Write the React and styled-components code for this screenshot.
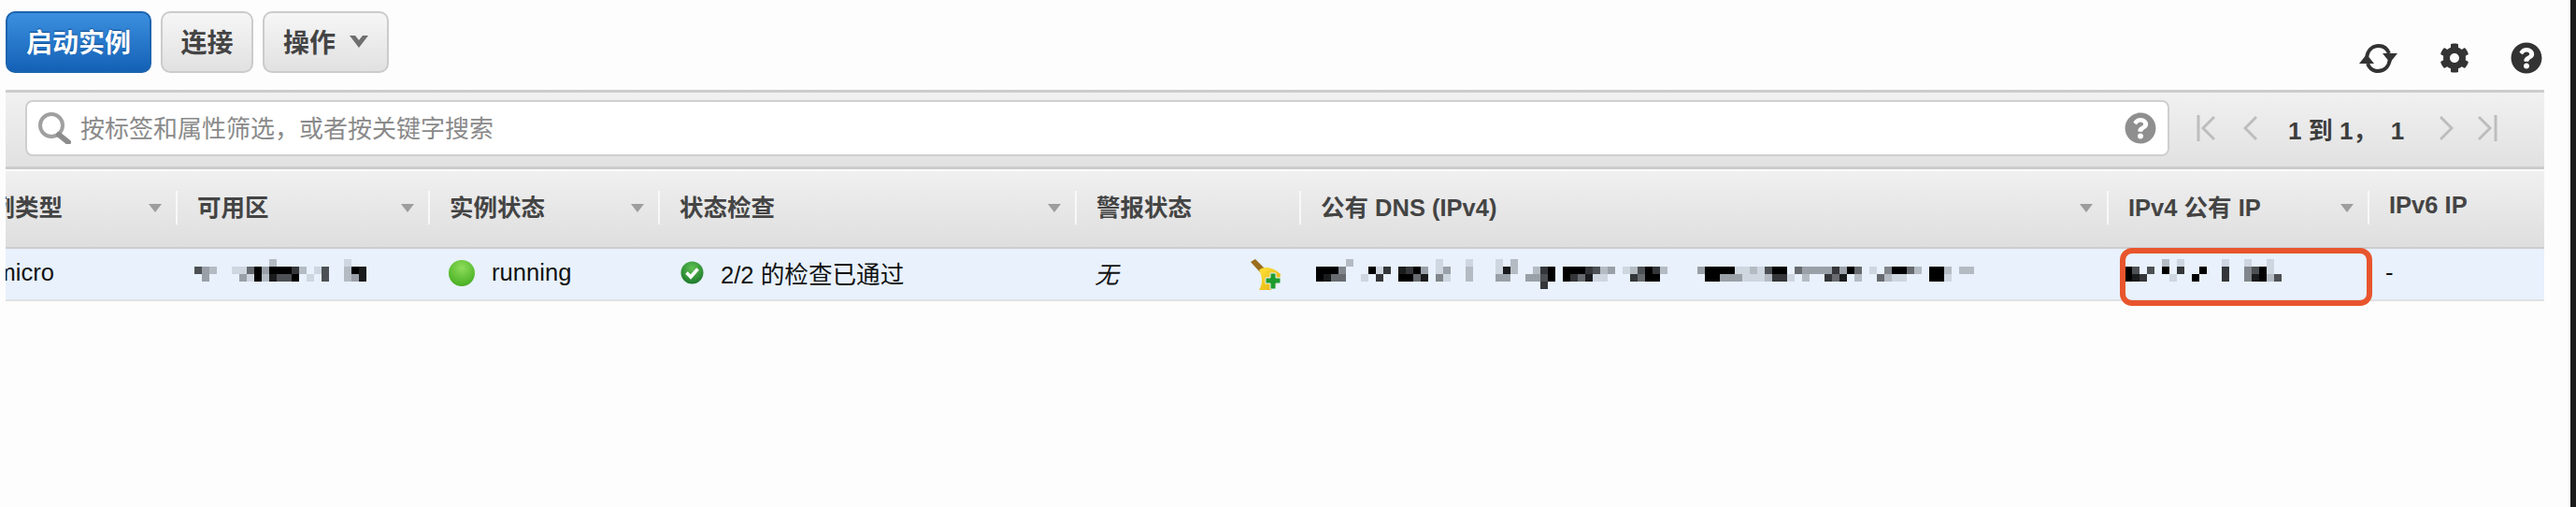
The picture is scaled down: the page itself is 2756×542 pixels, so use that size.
import React from 'react';
import styled, { createGlobalStyle } from 'styled-components';
import { FaCog, FaQuestionCircle } from 'react-icons/fa';

const GlobalStyle = createGlobalStyle`
  html, body {
    margin: 0;
    padding: 0;
    background: #fdfdfd;
  }
  body {
    font-family: "Liberation Sans", "Noto Sans CJK SC", sans-serif;
    color: #111;
  }
`;

const GRID_COLUMNS = '244px 270px 246px 446px 240px 864px 279px 189px';

const Page = styled.div`
  display: flex;
  width: 2756px;
  height: 542px;
  overflow: hidden;
`;

const Main = styled.div`
  flex: 1;
  min-width: 0;
  padding: 0 28px 0 6px;
`;

const Strip = styled.div`
  width: 6px;
  background: #1b1b1b;
`;

const Toolbar = styled.div`
  display: flex;
  justify-content: space-between;
  height: 96px;
  padding-top: 12px;
  box-sizing: border-box;
`;

const Buttons = styled.div`
  display: flex;
  gap: 10px;
`;

const Button = styled.div`
  display: flex;
  align-items: center;
  justify-content: center;
  gap: 15px;
  box-sizing: border-box;
  width: ${(props) => props.$width}px;
  height: 66px;
  padding-bottom: 3px;
  border-radius: 10px;
  font-size: 28px;
  font-weight: 700;
  border: 2px solid ${(props) => (props.$primary ? '#1d64ad' : '#cbcbcb')};
  color: ${(props) => (props.$primary ? '#fff' : '#444')};
  background: ${(props) => (props.$primary
    ? 'linear-gradient(#3c8fdf, #1361b6)'
    : 'linear-gradient(#f6f6f6, #e1e1e1)')};
  text-shadow: ${(props) => (props.$primary ? '0 -1px 1px #0d4d92' : 'none')};
`;

const ToolIcons = styled.div`
  display: flex;
  align-self: flex-end;
  align-items: center;
  margin: 0 2px 17px 0;
  color: #333;
`;

const ToolIcon = styled.div`
  display: flex;
  margin-left: ${(props) => props.$gap || 0}px;
`;

const FilterBar = styled.div`
  display: flex;
  align-items: flex-start;
  box-sizing: border-box;
  height: 85px;
  padding: 8px 0 0 21px;
  border-top: 3px solid #ccc;
  border-bottom: 3px solid #ccc;
  background: linear-gradient(#f1f1f1, #e1e1e1);
`;

const SearchBox = styled.div`
  display: flex;
  align-items: center;
  box-sizing: border-box;
  width: 2294px;
  height: 60px;
  padding: 0 12px 0 11px;
  border: 2px solid #cfcfcf;
  border-radius: 8px;
  background: #fff;
  color: #8f8f8f;
`;

const Placeholder = styled.span`
  flex: 1;
  margin: 0 0 3px 10px;
  font-size: 26px;
  color: #8a8a8a;
`;

const Pager = styled.div`
  display: flex;
  align-items: center;
  height: 60px;
  padding-left: 29px;
  color: #bdbdbd;
`;

const PagerText = styled.span`
  margin: 0 38px 0 33px;
  font-size: 26px;
  font-weight: 700;
  color: #3d3d3d;
  white-space: pre;
`;

const Chevron = styled.svg`
  display: block;
  margin-right: ${(props) => props.$gap || 0}px;
`;

const TableClip = styled.div`
  margin-top: 2px;
  overflow-x: clip;
`;

const Table = styled.div`
  width: 2778px;
  margin-left: -62px;
`;

const HeadRow = styled.div`
  display: grid;
  grid-template-columns: ${GRID_COLUMNS};
  height: 83px;
  box-sizing: border-box;
  border-bottom: 2px solid #cccdd0;
  background: linear-gradient(#f0f0f0, #dedede);
`;

const HeadCell = styled.div`
  display: flex;
  align-items: center;
  padding-bottom: 3px;
  box-sizing: border-box;
`;

const HeadInner = styled.div`
  display: flex;
  flex: 1;
  align-items: center;
  box-sizing: border-box;
  height: 36px;
  padding: 0 15px 6px 21px;
  font-size: 25.5px;
  font-weight: 700;
  color: #444;
  white-space: nowrap;
  border-left: ${(props) => (props.$first ? 'none' : '2px solid #f8f8f8')};
`;

const SortArrow = styled.i`
  margin: 6px 0 0 auto;
  width: 0;
  height: 0;
  border-left: 7px solid transparent;
  border-right: 7px solid transparent;
  border-top: 9px solid #9d9d9d;
`;

const BodyRow = styled.div`
  display: grid;
  grid-template-columns: ${GRID_COLUMNS};
  height: 56px;
  box-sizing: border-box;
  border-bottom: 2px solid #dfe1e3;
  background: #e8f1fc;
`;

const Cell = styled.div`
  position: relative;
  display: flex;
  align-items: center;
  gap: ${(props) => props.$gap || 0}px;
  padding-left: ${(props) => props.$pad || 23}px;
  padding-bottom: 3px;
  font-size: 25.6px;
  white-space: nowrap;
`;

const StatusDot = styled.span`
  width: 28px;
  height: 28px;
  border-radius: 50%;
  background: radial-gradient(circle at 50% 30%, #8fdc5c, #55b92c 65%, #3d9a1e);
`;

const Italic = styled.span`
  font-style: italic;
`;

const Broom = styled.svg`
  margin: 3px 19px 0 auto;
`;

const Mosaic = styled.svg`
  display: block;
  margin-top: 3px;
  filter: blur(0.7px);
`;

const Highlight = styled.div`
  position: absolute;
  left: 14px;
  top: -1px;
  width: 270px;
  height: 62px;
  box-sizing: border-box;
  border: 6px solid #e8552d;
  border-radius: 13px;
`;

const zoneCells = [
  [[10, 2], [20, 1]],
  [[0, 6], [1, 3], [2, 2], [5, 1], [6, 1], [7, 5], [8, 9], [9, 3], [10, 9], [11, 9], [12, 9], [13, 7], [14, 2], [16, 1], [17, 6], [20, 2], [21, 9], [22, 8]],
  [[1, 3], [6, 3], [7, 1], [8, 9], [9, 2], [10, 8], [11, 6], [12, 6], [13, 9], [15, 1], [17, 6], [20, 2], [21, 3], [22, 8]],
];

const dnsCells = [
  [[4, 2], [16, 1], [20, 1], [24, 1], [26, 2]],
  [[0, 9], [1, 9], [2, 9], [3, 4], [7, 9], [8, 1], [9, 7], [11, 8], [12, 7], [13, 9], [14, 3], [16, 1], [17, 3], [20, 2], [24, 1], [25, 8], [26, 2], [29, 2], [30, 7], [31, 9], [33, 9], [34, 9], [35, 9], [36, 7], [37, 6], [38, 2], [39, 3], [41, 1], [42, 2], [43, 6], [44, 9], [45, 7], [46, 2], [51, 3], [52, 9], [53, 9], [54, 9], [55, 9], [56, 1], [57, 1], [58, 2], [59, 1], [60, 6], [61, 9], [62, 9], [64, 5], [65, 3], [66, 3], [67, 3], [68, 3], [69, 7], [70, 3], [71, 9], [72, 5], [74, 1], [76, 4], [77, 9], [78, 9], [79, 5], [80, 2], [82, 9], [83, 9], [84, 2], [86, 2], [87, 2]],
  [[0, 9], [1, 8], [2, 5], [3, 5], [6, 1], [8, 7], [11, 9], [12, 9], [13, 5], [14, 8], [16, 4], [17, 1], [20, 2], [24, 3], [25, 3], [28, 3], [29, 3], [30, 6], [31, 9], [33, 9], [34, 7], [35, 5], [36, 8], [37, 1], [38, 1], [42, 7], [43, 5], [44, 9], [45, 9], [52, 9], [53, 9], [54, 3], [55, 3], [56, 3], [57, 1], [58, 1], [59, 1], [60, 2], [61, 7], [62, 7], [63, 1], [65, 2], [68, 7], [69, 5], [70, 8], [72, 2], [75, 5], [76, 2], [77, 1], [78, 1], [82, 9], [83, 9], [84, 1]],
  [[30, 7]],
];

const ipCells = [
  [[5, 2], [7, 1], [13, 1], [16, 1], [19, 1]],
  [[0, 9], [1, 6], [3, 6], [5, 9], [7, 7], [10, 9], [13, 7], [16, 4], [17, 6], [18, 9], [19, 1]],
  [[0, 9], [1, 8], [2, 7], [6, 1], [9, 9], [13, 7], [16, 4], [17, 8], [18, 9], [19, 2], [20, 6]],
];

// redacted text, drawn as the pixel blocks of the screenshot
const Redacted = ({ rows, cols }) => (
  <Mosaic width={cols * 8} height={32} viewBox={`0 0 ${cols * 8} 32`} shapeRendering="crispEdges">
    {rows.map((row, y) => row.map(([x, v]) => (
      <rect key={`${x}-${y}`} x={x * 8} y={y * 8} width={8} height={8} fill="#000" opacity={v / 9} />
    )))}
  </Mosaic>
);

const Caret = () => (
  <svg width="20" height="14" viewBox="0 0 20 14">
    <path d="M0 1 L6 1 L10 6 L14 1 L20 1 L10 14 Z" fill="#6f6f6f" />
  </svg>
);

const RefreshIcon = () => (
  <svg width="41" height="33" viewBox="0 0 41 33" fill="none" stroke="#333" strokeWidth="4">
    <path d="M8 16 C9 8 14 3 21 3 C26 3 30 6 32 11" />
    <path d="M33 17 C32 25 27 30 20 30 C15 30 11 27 9 22" />
    <path d="M25 11 L41 11 L33 21 Z" fill="#333" stroke="none" />
    <path d="M0 22 L16 22 L8 12 Z" fill="#333" stroke="none" />
  </svg>
);

const SearchIcon = () => (
  <svg width="36" height="34" viewBox="0 0 36 34" fill="none">
    <ellipse cx="15" cy="14" rx="12" ry="12" stroke="#a0a0a0" strokeWidth="4" />
    <path d="M23 24 L33 32" stroke="#8c8c8c" strokeWidth="6" strokeLinecap="round" />
  </svg>
);

const FirstIcon = () => (
  <Chevron $gap={30} width="20" height="28" viewBox="0 0 20 28" fill="none" stroke="currentColor" strokeWidth="3">
    <path d="M2 0 V28 M19 2 L7 14 L19 26" />
  </Chevron>
);

const PrevIcon = () => (
  <svg width="15" height="28" viewBox="0 0 15 28" fill="none" stroke="currentColor" strokeWidth="3">
    <path d="M14 2 L2 14 L14 26" />
  </svg>
);

const NextIcon = () => (
  <Chevron $gap={26} width="15" height="28" viewBox="0 0 15 28" fill="none" stroke="currentColor" strokeWidth="3">
    <path d="M1 2 L13 14 L1 26" />
  </Chevron>
);

const LastIcon = () => (
  <svg width="21" height="28" viewBox="0 0 21 28" fill="none" stroke="currentColor" strokeWidth="3">
    <path d="M19 0 V28 M1 2 L13 14 L1 26" />
  </svg>
);

const CheckIcon = () => (
  <svg width="25" height="25" viewBox="0 0 25 25">
    <defs>
      <radialGradient id="checkGreen" cx="50%" cy="30%" r="70%">
        <stop offset="0%" stopColor="#5fc050" />
        <stop offset="100%" stopColor="#1d7a2c" />
      </radialGradient>
    </defs>
    <circle cx="12.5" cy="12.5" r="12" fill="url(#checkGreen)" />
    <path d="M6.5 12.5 L11 17 L18.5 8.5" fill="none" stroke="#fff" strokeWidth="3.6" />
  </svg>
);

const BroomIcon = () => (
  <Broom width="33" height="33" viewBox="0 0 33 33">
    <defs>
      <linearGradient id="broomHead" x1="0" y1="0" x2="1" y2="1">
        <stop offset="0%" stopColor="#ffe23a" />
        <stop offset="100%" stopColor="#e3ac0c" />
      </linearGradient>
    </defs>
    <path d="M0 3 L5 0 L15 10 L10 14 Z" fill="#9a6d1d" />
    <path d="M9 12 C13 7 24 8 32 16 L31 24 L22 33 L9 33 C13 26 13 19 9 12 Z" fill="url(#broomHead)" />
    <path d="M21 15 H27 V20 H32 V26 H27 V32 H21 V26 H16 V20 H21 Z" fill="#1f9c2e" stroke="#e8f1fc" strokeWidth="1" />
  </Broom>
);

const columns = [
  { title: '实例类型', sort: true, first: true },
  { title: '可用区', sort: true },
  { title: '实例状态', sort: true },
  { title: '状态检查', sort: true },
  { title: '警报状态' },
  { title: '公有 DNS (IPv4)', sort: true },
  { title: 'IPv4 公有 IP', sort: true },
  { title: 'IPv6 IP' },
];

const App = () => (
  <Page>
    <GlobalStyle />
    <Main>
      <Toolbar>
        <Buttons>
          <Button $primary $width={156}>启动实例</Button>
          <Button $width={99}>连接</Button>
          <Button $width={135}>操作<Caret /></Button>
        </Buttons>
        <ToolIcons>
          <ToolIcon><RefreshIcon /></ToolIcon>
          <ToolIcon $gap={45}><FaCog size={32} /></ToolIcon>
          <ToolIcon $gap={44}><FaQuestionCircle size={34} /></ToolIcon>
        </ToolIcons>
      </Toolbar>
      <FilterBar>
        <SearchBox>
          <SearchIcon />
          <Placeholder>按标签和属性筛选，或者按关键字搜索</Placeholder>
          <FaQuestionCircle size={34} />
        </SearchBox>
        <Pager>
          <FirstIcon />
          <PrevIcon />
          <PagerText>1 到 1，  1</PagerText>
          <NextIcon />
          <LastIcon />
        </Pager>
      </FilterBar>
      <TableClip>
        <Table>
          <HeadRow>
            {columns.map((col) => (
              <HeadCell key={col.title}>
                <HeadInner $first={col.first}>
                  {col.title}
                  {col.sort && <SortArrow />}
                </HeadInner>
              </HeadCell>
            ))}
          </HeadRow>
          <BodyRow>
            <Cell>t2.micro</Cell>
            <Cell $pad={20}><Redacted rows={zoneCells} cols={23} /></Cell>
            <Cell $pad={22} $gap={18}><StatusDot />running</Cell>
            <Cell $pad={24} $gap={18}><CheckIcon />2/2 的检查已通过</Cell>
            <Cell $pad={21}><Italic>无</Italic><BroomIcon /></Cell>
            <Cell $pad={18}><Redacted rows={dnsCells} cols={88} /></Cell>
            <Cell $pad={19}>
              <Redacted rows={ipCells} cols={21} />
              <Highlight />
            </Cell>
            <Cell $pad={19}>-</Cell>
          </BodyRow>
        </Table>
      </TableClip>
    </Main>
    <Strip />
  </Page>
);

export default App;
